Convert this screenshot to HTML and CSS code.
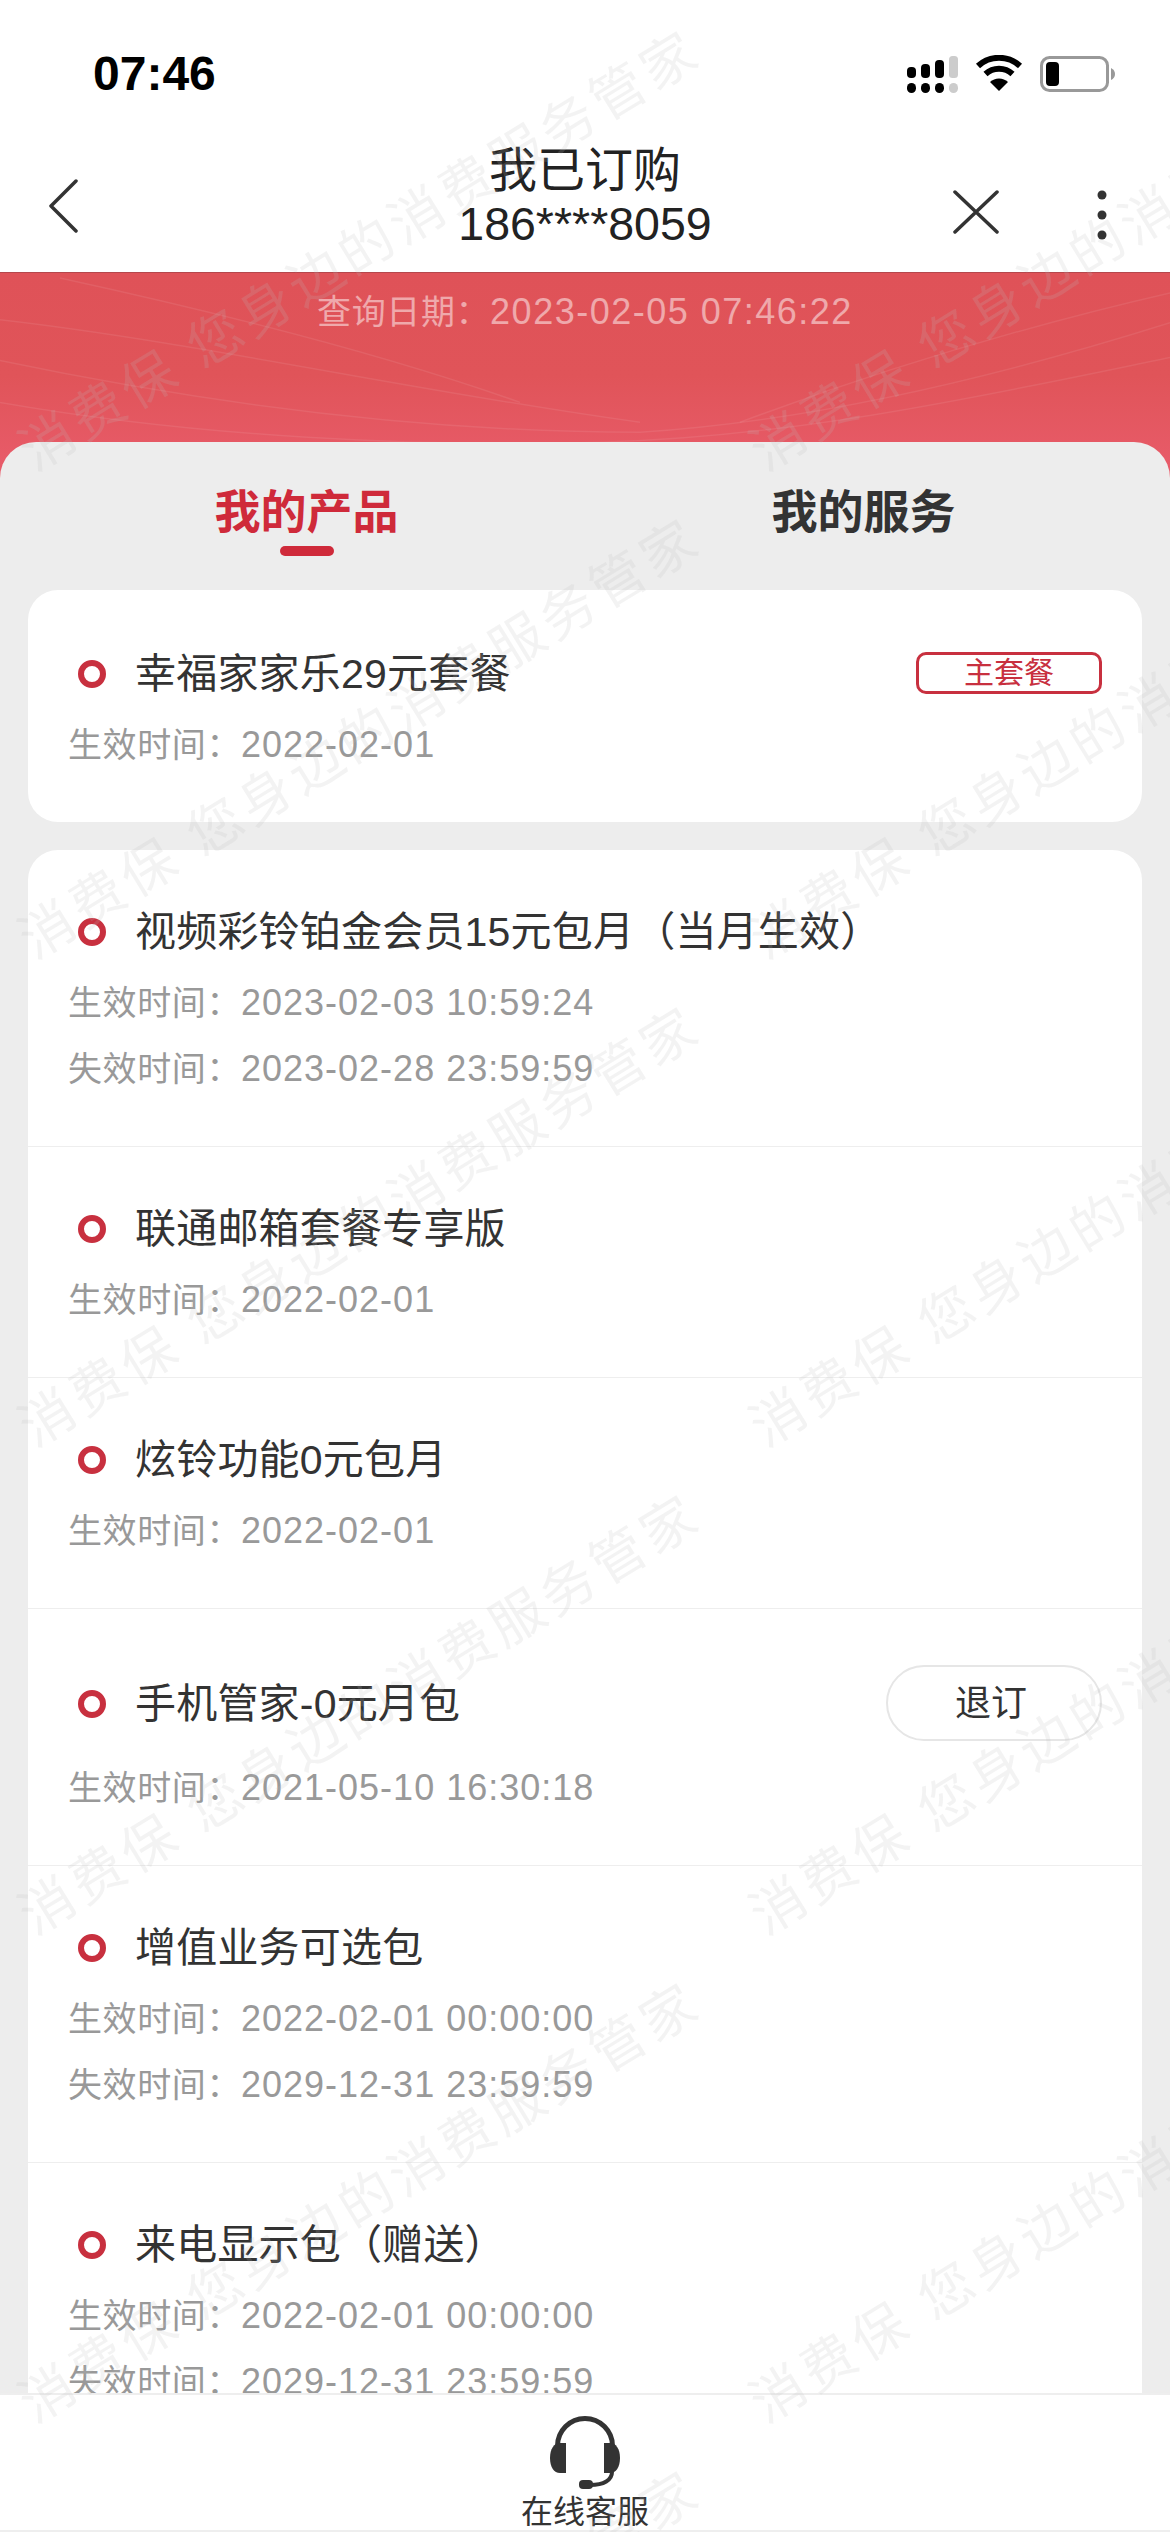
FILE: index.html
```html
<!DOCTYPE html>
<html lang="zh-CN">
<head>
    <meta charset="UTF-8">
    <meta name="viewport" content="width=device-width, initial-scale=1.0">
    <title>我已订购</title>
    <link rel="stylesheet" href="styles.css">
</head>
<body>
<div class="page">
    <header class="top">
        <div class="status-bar">
            <span class="time">07:46</span>
            <svg class="status-icons" viewBox="907 55 208 40" width="208" height="40">
                <rect x="907" y="67" width="9" height="11" rx="4" fill="#000"/>
                <rect x="921" y="64" width="9" height="14" rx="4" fill="#000"/>
                <rect x="935" y="60" width="9" height="18" rx="4" fill="#000"/>
                <rect x="949" y="56" width="9" height="22" rx="3.5" fill="#ccc"/>
                <rect x="907" y="83" width="9" height="10" rx="4.5" fill="#000"/>
                <rect x="921" y="83" width="9" height="10" rx="4.5" fill="#000"/>
                <rect x="935" y="83" width="9" height="10" rx="4.5" fill="#000"/>
                <rect x="949" y="83" width="9" height="10" rx="4.5" fill="#ccc"/>
                <path d="M978 66 A31 31 0 0 1 1020 66 M985.5 74 A20 20 0 0 1 1012.500 74" fill="none" stroke="#000" stroke-width="6"/>
                <path d="M990 82 A13 13 0 0 1 1008 82 L999 91 Z" fill="#000"/>
                <rect x="1041.500" y="57.500" width="66" height="33" rx="8" fill="none" stroke="#999" stroke-width="3"/>
                <rect x="1046" y="62" width="13" height="24" rx="4" fill="#000"/>
                <path d="M1111 68 Q1115 70 1115 74 Q1115 78 1111 80 Z" fill="#999"/>
            </svg>
        </div>
        <nav class="nav">
            <div class="nav-left">
                <svg class="icon-back" viewBox="0 0 30 54" width="30" height="54">
                    <path d="M28 2 L3 27 L28 52" fill="none" stroke="#333" stroke-width="3.500" stroke-linecap="round" stroke-linejoin="round"/>
                </svg>
            </div>
            <div class="nav-title">
                <div class="nav-name">我已订购</div>
                <div class="nav-phone">186****8059</div>
            </div>
            <div class="nav-right">
                <svg viewBox="0 0 46 44" width="46" height="44">
                    <path d="M2 2 L44 42 M44 2 L2 42" fill="none" stroke="#333" stroke-width="3.500" stroke-linecap="round"/>
                </svg>
                <svg viewBox="0 0 10 50" width="10" height="50">
                    <circle cx="5" cy="5" r="4.500" fill="#333"/>
                    <circle cx="5" cy="25" r="4.500" fill="#333"/>
                    <circle cx="5" cy="45" r="4.500" fill="#333"/>
                </svg>
            </div>
        </nav>
    </header>

    <section class="banner">
        <svg class="banner-lines" viewBox="0 0 1170 206" preserveAspectRatio="none">
            <path d="M0 47 C200 70 420 120 640 150"/>
            <path d="M0 88 C200 130 420 160 640 160 C800 150 980 110 1170 50"/>
            <path d="M0 130 C200 165 420 175 600 170 C800 165 1000 120 1170 85"/>
            <path d="M60 5 C220 40 380 80 520 130"/>
            <path d="M1170 20 C1040 50 900 90 740 150"/>
        </svg>
        <div class="query-date">查询日期：<span class="query-value">2023-02-05 07:46:22</span></div>
    </section>

    <main class="sheet">
        <div class="tabs">
            <div class="tab tab-active">我的产品</div>
            <div class="tab">我的服务</div>
        </div>

        <div class="card">
            <div class="row row-main">
                <div class="row-head">
                    <i class="dot"></i>
                    <span class="row-title">幸福家家乐29元套餐</span>
                    <span class="tag">主套餐</span>
                </div>
                <div class="meta">生效时间：<span class="meta-value">2022-02-01</span></div>
            </div>
        </div>

        <div class="card">
            <div class="row">
                <div class="row-head">
                    <i class="dot"></i>
                    <span class="row-title">视频彩铃铂金会员15元包月（当月生效）</span>
                </div>
                <div class="meta">生效时间：<span class="meta-value">2023-02-03 10:59:24</span></div>
                <div class="meta">失效时间：<span class="meta-value">2023-02-28 23:59:59</span></div>
            </div>
            <div class="row">
                <div class="row-head">
                    <i class="dot"></i>
                    <span class="row-title">联通邮箱套餐专享版</span>
                </div>
                <div class="meta">生效时间：<span class="meta-value">2022-02-01</span></div>
            </div>
            <div class="row">
                <div class="row-head">
                    <i class="dot"></i>
                    <span class="row-title">炫铃功能0元包月</span>
                </div>
                <div class="meta">生效时间：<span class="meta-value">2022-02-01</span></div>
            </div>
            <div class="row">
                <div class="row-head">
                    <i class="dot"></i>
                    <span class="row-title">手机管家-0元月包</span>
                    <span class="cancel-button">退订</span>
                </div>
                <div class="meta">生效时间：<span class="meta-value">2021-05-10 16:30:18</span></div>
            </div>
            <div class="row">
                <div class="row-head">
                    <i class="dot"></i>
                    <span class="row-title">增值业务可选包</span>
                </div>
                <div class="meta">生效时间：<span class="meta-value">2022-02-01 00:00:00</span></div>
                <div class="meta">失效时间：<span class="meta-value">2029-12-31 23:59:59</span></div>
            </div>
            <div class="row">
                <div class="row-head">
                    <i class="dot"></i>
                    <span class="row-title">来电显示包（赠送）</span>
                </div>
                <div class="meta">生效时间：<span class="meta-value">2022-02-01 00:00:00</span></div>
                <div class="meta">失效时间：<span class="meta-value">2029-12-31 23:59:59</span></div>
            </div>
        </div>
    </main>

    <footer class="service-bar">
        <svg viewBox="0 0 70 74" width="70" height="74">
            <path d="M7.500 30 A27.500 27.500 0 0 1 62.500 30" fill="none" stroke="#333" stroke-width="5"/>
            <path d="M16 27 H10 C4 27 0 33 0 42 C0 51 4 57 10 57 H16 Z" fill="#333"/>
            <path d="M54 27 H60 C66 27 70 33 70 42 C70 51 66 57 60 57 H54 Z" fill="#333"/>
            <path d="M62 56 C62 64 54 69 40 69" fill="none" stroke="#333" stroke-width="4"/>
            <rect x="29" y="64" width="14" height="9" rx="4" fill="#333"/>
        </svg>
        <span class="service-label">在线客服</span>
    </footer>

    <div class="watermark">
        <div class="watermark-cell"><span>消费保 您身边的消费服务管家</span></div>
        <div class="watermark-cell"><span>消费保 您身边的消费服务管家</span></div>
        <div class="watermark-cell"><span>消费保 您身边的消费服务管家</span></div>
        <div class="watermark-cell"><span>消费保 您身边的消费服务管家</span></div>
        <div class="watermark-cell"><span>消费保 您身边的消费服务管家</span></div>
        <div class="watermark-cell"><span>消费保 您身边的消费服务管家</span></div>
        <div class="watermark-cell"><span>消费保 您身边的消费服务管家</span></div>
        <div class="watermark-cell"><span>消费保 您身边的消费服务管家</span></div>
        <div class="watermark-cell"><span>消费保 您身边的消费服务管家</span></div>
        <div class="watermark-cell"><span>消费保 您身边的消费服务管家</span></div>
        <div class="watermark-cell"><span>消费保 您身边的消费服务管家</span></div>
        <div class="watermark-cell"><span>消费保 您身边的消费服务管家</span></div>
    </div>
</div>
</body>
</html>
```
FILE: styles.css
```css
* {
    box-sizing: border-box;
}

body {
    margin: 0;
    font-family: "Liberation Sans", "Noto Sans CJK SC", sans-serif;
    color: #333;
    background: #fff;
}

.page {
    position: relative;
    width: 1170px;
    height: 2532px;
    overflow: hidden;
    display: flex;
    flex-direction: column;
}

/* Status bar and nav */
.top {
    height: 272px;
    flex: none;
    background: #fff;
}

.status-bar {
    height: 110px;
    padding: 46px 55px 0 93px;
    display: flex;
    justify-content: space-between;
    align-items: flex-start;
}

.time {
    font-size: 48px;
    line-height: 56px;
    font-weight: bold;
    color: #000;
}

.status-icons {
    margin-top: 9px;
}

.nav {
    display: grid;
    grid-template-columns: 1fr auto 1fr;
    padding-top: 33px;
}

.nav-left {
    padding: 36px 0 0 48px;
}

.icon-back {
    display: block;
}

.nav-title {
    text-align: center;
    color: #222;
}

.nav-name {
    font-size: 48px;
    line-height: 56px;
}

.nav-phone {
    font-size: 46.5px;
    line-height: 50px;
}

.nav-right {
    padding: 47px 63px 0 0;
    display: flex;
    justify-content: flex-end;
    align-items: flex-start;
    gap: 98px;
}

/* Red banner */
.banner {
    position: relative;
    height: 206px;
    flex: none;
    padding-top: 16px;
    background: linear-gradient(#df5258, #e05459 50%, #e95c6b);
    border-top: 1px solid #b5474c;
    overflow: hidden;
}

.banner-lines {
    position: absolute;
    top: 0;
    left: 0;
    width: 100%;
    height: 100%;
}

.banner-lines path {
    fill: none;
    stroke: rgba(255,255,255,0.08);
    stroke-width: 1.5;
}

.query-date {
    position: relative;
    text-align: center;
    font-size: 34px;
    line-height: 46px;
    letter-spacing: 0.6px;
    color: rgba(255,255,255,0.5);
}

.query-value {
    font-size: 36px;
    letter-spacing: 1.5px;
}

/* Grey sheet */
.sheet {
    position: relative;
    flex: 1;
    min-height: 0;
    margin-top: -36px;
    padding: 0 28px;
    background: #ededed;
    border-radius: 36px 36px 0 0;
    overflow: hidden;
}

.tabs {
    height: 148px;
    display: grid;
    grid-template-columns: 1fr 1fr;
}

.tab {
    position: relative;
    padding-top: 37px;
    text-align: center;
    font-size: 46px;
    line-height: 66px;
    font-weight: bold;
}

.tab-active {
    color: #cf2a3a;
}

.tab-active::after {
    content: "";
    position: absolute;
    left: 50%;
    top: 104px;
    width: 54px;
    height: 10px;
    margin-left: -27px;
    border-radius: 5px;
    background: #cf2a3a;
}

.card {
    margin-bottom: 28px;
    background: #fff;
    border-radius: 30px;
}

.row {
    padding: 51px 40px 44px;
    border-bottom: 1px solid #eee;
}

.row:last-child {
    border-bottom: none;
}

.row-main {
    padding-top: 53px;
}

.row-head {
    min-height: 60px;
    margin-bottom: 9px;
    padding-left: 10px;
    display: flex;
    align-items: center;
}

.dot {
    width: 28px;
    height: 28px;
    margin-top: 2px;
    margin-right: 29px;
    flex: none;
    border: 6px solid #c8303f;
    border-radius: 50%;
}

.row-title {
    flex: 1;
    padding-top: 2px;
    font-size: 41px;
    line-height: 48px;
    letter-spacing: 0.2px;
    color: #333;
}

.tag {
    width: 186px;
    height: 42px;
    border: 3px solid #c8303f;
    border-radius: 10px;
    text-align: center;
    font-size: 30px;
    line-height: 36px;
    color: #c8303f;
}

.cancel-button {
    width: 216px;
    height: 76px;
    margin: 5px 0;
    border: 2.5px solid #e6e6e6;
    border-radius: 38px;
    padding-right: 6px;
    text-align: center;
    font-size: 36px;
    line-height: 74px;
    color: #333;
}

.meta {
    font-size: 34px;
    line-height: 66px;
    letter-spacing: 0.6px;
    color: #999;
}

.meta-value {
    font-size: 36px;
    letter-spacing: 1px;
}

/* Bottom service bar */
.service-bar {
    position: relative;
    height: 139px;
    flex: none;
    padding-top: 21px;
    display: flex;
    flex-direction: column;
    align-items: center;
    background: #fff;
    border-top: 2px solid #eee;
    border-bottom: 2px solid #eee;
}

.service-label {
    margin-top: 4px;
    font-size: 32px;
    line-height: 36px;
    color: #333;
}

/* Watermark over everything */
.watermark {
    position: absolute;
    top: 2px;
    left: -8px;
    display: grid;
    grid-template-columns: repeat(2, 731px);
    grid-auto-rows: 488px;
    pointer-events: none;
}

.watermark-cell {
    display: flex;
    justify-content: center;
    align-items: center;
}

.watermark-cell span {
    font-size: 54px;
    letter-spacing: 5px;
    white-space: nowrap;
    color: rgba(190,190,190,0.18);
    transform: rotate(-31.5deg);
}
```
